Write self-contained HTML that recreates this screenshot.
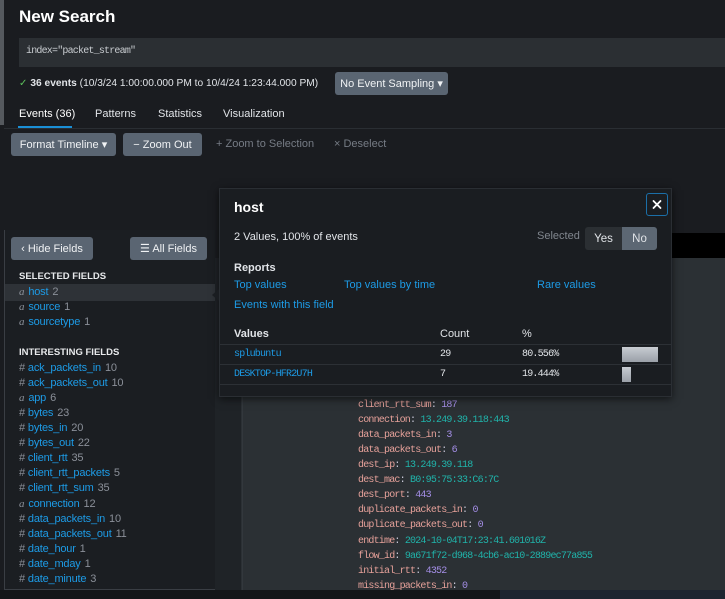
<!DOCTYPE html>
<html><head><meta charset="utf-8"><style>
*{margin:0;padding:0;box-sizing:border-box}
body{width:725px;height:599px;overflow:hidden;background:#1a1c20;font-family:"Liberation Sans",sans-serif;color:#e1e4e8;position:relative;font-size:11px}
.a{position:absolute;white-space:nowrap}
.mono{font-family:"Liberation Mono",monospace;letter-spacing:-0.8px}
.btn{position:absolute;background:#5a6572;color:#f0f2f4;border-radius:3px;font-size:11px;display:flex;align-items:center;justify-content:center;white-space:nowrap}
.blue{color:#1d9be6}
.fl{position:absolute;left:19px;font-size:11px;letter-spacing:-0.2px;white-space:nowrap}
.fl i{color:#8b9099;font-style:italic;font-family:"Liberation Serif",serif;margin-right:4px}
.fl b{color:#8b9099;font-weight:normal;margin-right:3px}
.fl s{text-decoration:none;color:#8b9099;margin-left:4px}
.ev{position:absolute;left:358px;font-family:"Liberation Mono",monospace;letter-spacing:-0.8px;font-size:10px;white-space:nowrap;color:#e6a19a}
.ev .c{color:#ccd}
.n{color:#a48ee6}.t{color:#20b3aa}
</style></head><body>
<div class="a" style="left:0;top:0;width:4px;height:125px;background:#55595e"></div>
<div class="a" style="left:19px;top:7px;font-size:17px;font-weight:bold;color:#fff">New Search</div>
<div class="a" style="left:19px;top:38px;width:706px;height:29px;background:#2b2f33"></div>
<div class="a mono" style="left:26px;top:46px;font-size:10px;color:#c8ccd0">index="packet_stream"</div>
<div class="a" style="left:19px;top:78px;font-size:10.2px"><span style="color:#5cc05c">✓</span> <b>36 events</b> (10/3/24 1:00:00.000 PM to 10/4/24 1:23:44.000 PM)</div>
<div class="btn" style="left:335px;top:72px;width:113px;height:23px">No Event Sampling ▾</div>
<div class="a" style="left:19px;top:108px;font-size:11px;color:#fff">Events (36)</div>
<div class="a" style="left:95px;top:108px;font-size:11px">Patterns</div>
<div class="a" style="left:158px;top:108px;font-size:11px">Statistics</div>
<div class="a" style="left:223px;top:108px;font-size:11px">Visualization</div>
<div class="a" style="left:18px;top:126px;width:54px;height:2px;background:#1a8fd6"></div>
<div class="a" style="left:4px;top:128px;width:721px;height:1px;background:#2a2e33"></div>
<div class="btn" style="left:11px;top:133px;width:105px;height:23px">Format Timeline ▾</div>
<div class="btn" style="left:123px;top:133px;width:79px;height:23px">− Zoom Out</div>
<div class="a" style="left:216px;top:138px;font-size:11px;color:#767c85">+ Zoom to Selection</div>
<div class="a" style="left:334px;top:138px;font-size:11px;color:#767c85">× Deselect</div>

<div class="a" style="left:672px;top:233px;width:53px;height:25px;background:#000"></div>
<div class="a" style="left:215px;top:258px;width:510px;height:332px;background:#2b3034"></div>
<div class="a" style="left:215px;top:258px;width:26px;height:332px;background:#1f2327"></div>
<div class="a" style="left:242px;top:258px;width:1px;height:332px;background:#33383d"></div>
<div class="a" style="left:0;top:590px;width:725px;height:9px;background:#141619"></div>
<div class="a" style="left:500px;top:590px;width:225px;height:9px;background:#1d2530"></div>

<div class="a" style="left:4px;top:230px;width:211px;height:360px;background:#1b1e22;border-bottom:1px solid #3a3e44;border-left:1px solid #3a3e44"></div>
<div class="btn" style="left:11px;top:237px;width:82px;height:23px">‹ Hide Fields</div>
<div class="btn" style="left:130px;top:237px;width:77px;height:23px">☰ All Fields</div>
<div class="a" style="left:19px;top:271px;font-size:9.5px;font-weight:bold;color:#e8eaec">SELECTED FIELDS</div>
<div class="a" style="left:5px;top:284px;width:210px;height:17px;background:#2e3237"></div>
<div class="fl" style="top:286px"><i>a</i><span class="blue">host</span><s>2</s></div>
<div class="fl" style="top:301px"><i>a</i><span class="blue">source</span><s>1</s></div>
<div class="fl" style="top:316px"><i>a</i><span class="blue">sourcetype</span><s>1</s></div>
<div class="a" style="left:19px;top:347px;font-size:9.5px;font-weight:bold;color:#e8eaec">INTERESTING FIELDS</div>
<div class="fl" style="top:362px"><b>#</b><span class="blue">ack_packets_in</span><s>10</s></div>
<div class="fl" style="top:377px"><b>#</b><span class="blue">ack_packets_out</span><s>10</s></div>
<div class="fl" style="top:392px"><i>a</i><span class="blue">app</span><s>6</s></div>
<div class="fl" style="top:407px"><b>#</b><span class="blue">bytes</span><s>23</s></div>
<div class="fl" style="top:422px"><b>#</b><span class="blue">bytes_in</span><s>20</s></div>
<div class="fl" style="top:437px"><b>#</b><span class="blue">bytes_out</span><s>22</s></div>
<div class="fl" style="top:452px"><b>#</b><span class="blue">client_rtt</span><s>35</s></div>
<div class="fl" style="top:467px"><b>#</b><span class="blue">client_rtt_packets</span><s>5</s></div>
<div class="fl" style="top:482px"><b>#</b><span class="blue">client_rtt_sum</span><s>35</s></div>
<div class="fl" style="top:498px"><i>a</i><span class="blue">connection</span><s>12</s></div>
<div class="fl" style="top:513px"><b>#</b><span class="blue">data_packets_in</span><s>10</s></div>
<div class="fl" style="top:528px"><b>#</b><span class="blue">data_packets_out</span><s>11</s></div>
<div class="fl" style="top:543px"><b>#</b><span class="blue">date_hour</span><s>1</s></div>
<div class="fl" style="top:558px"><b>#</b><span class="blue">date_mday</span><s>1</s></div>
<div class="fl" style="top:573px"><b>#</b><span class="blue">date_minute</span><s>3</s></div>

<div class="ev" style="top:400px">client_rtt_sum<span class="c">:</span> <span class="n">187</span></div>
<div class="ev" style="top:415px">connection<span class="c">:</span> <span class="t">13.249.39.118:443</span></div>
<div class="ev" style="top:430px">data_packets_in<span class="c">:</span> <span class="n">3</span></div>
<div class="ev" style="top:445px">data_packets_out<span class="c">:</span> <span class="n">6</span></div>
<div class="ev" style="top:460px">dest_ip<span class="c">:</span> <span class="t">13.249.39.118</span></div>
<div class="ev" style="top:475px">dest_mac<span class="c">:</span> <span class="t">B0:95:75:33:C6:7C</span></div>
<div class="ev" style="top:490px">dest_port<span class="c">:</span> <span class="n">443</span></div>
<div class="ev" style="top:505px">duplicate_packets_in<span class="c">:</span> <span class="n">0</span></div>
<div class="ev" style="top:520px">duplicate_packets_out<span class="c">:</span> <span class="n">0</span></div>
<div class="ev" style="top:536px">endtime<span class="c">:</span> <span class="t">2024-10-04T17:23:41.601016Z</span></div>
<div class="ev" style="top:551px">flow_id<span class="c">:</span> <span class="t">9a671f72-d968-4cb6-ac10-2889ec77a855</span></div>
<div class="ev" style="top:566px">initial_rtt<span class="c">:</span> <span class="n">4352</span></div>
<div class="ev" style="top:581px">missing_packets_in<span class="c">:</span> <span class="n">0</span></div>

<div class="a" style="left:219px;top:188px;width:453px;height:209px;background:#1a1d21;border:1px solid #2a2e33;box-shadow:0 2px 8px rgba(0,0,0,.6)"></div>
<div class="a" style="left:212px;top:289px;width:0;height:0;border-top:6px solid transparent;border-bottom:6px solid transparent;border-right:7px solid #1a1d21"></div>
<div class="a" style="left:234px;top:199px;font-size:14px;font-weight:bold;color:#fff">host</div>
<div class="a" style="left:646px;top:193px;width:22px;height:23px;border:1px solid #1b6fa8;border-radius:3px"><svg width="20" height="21" viewBox="0 0 20 21" style="position:absolute;left:0;top:0"><path d="M6.5 7L13.5 14M13.5 7L6.5 14" stroke="#fff" stroke-width="1.8" stroke-linecap="round"/></svg></div>
<div class="a" style="left:234px;top:231px;font-size:11px">2 Values, 100% of events</div>
<div class="a" style="left:537px;top:230px;font-size:11px;color:#80868e">Selected</div>
<div class="a" style="left:585px;top:227px;width:37px;height:23px;background:#2b2f33;border-radius:3px 0 0 3px;display:flex;align-items:center;justify-content:center;font-size:11.5px">Yes</div>
<div class="a" style="left:622px;top:227px;width:35px;height:23px;background:#5c6773;border-radius:0 3px 3px 0;display:flex;align-items:center;justify-content:center;font-size:11.5px">No</div>
<div class="a" style="left:234px;top:262px;font-size:11px;font-weight:bold">Reports</div>
<div class="a blue" style="left:234px;top:279px;font-size:11px">Top values</div>
<div class="a blue" style="left:344px;top:279px;font-size:11px">Top values by time</div>
<div class="a blue" style="left:537px;top:279px;font-size:11px">Rare values</div>
<div class="a blue" style="left:234px;top:299px;font-size:11px">Events with this field</div>
<div class="a" style="left:234px;top:328px;font-size:11px;font-weight:bold">Values</div>
<div class="a" style="left:440px;top:328px;font-size:11px">Count</div>
<div class="a" style="left:522px;top:328px;font-size:11px">%</div>
<div class="a" style="left:220px;top:344px;width:451px;height:1px;background:#2c3035"></div>
<div class="a" style="left:220px;top:364px;width:451px;height:1px;background:#2c3035"></div>
<div class="a" style="left:220px;top:384px;width:451px;height:1px;background:#2c3035"></div>
<div class="a mono blue" style="left:234px;top:349px;font-size:10px">splubuntu</div>
<div class="a mono" style="left:440px;top:349px;font-size:10px">29</div>
<div class="a mono" style="left:522px;top:349px;font-size:10px">80.556%</div>
<div class="a" style="left:622px;top:347px;width:36px;height:15px;background:linear-gradient(#c8ccd2,#9aa0a8)"></div>
<div class="a mono blue" style="left:234px;top:369px;font-size:10px">DESKTOP-HFR2U7H</div>
<div class="a mono" style="left:440px;top:369px;font-size:10px">7</div>
<div class="a mono" style="left:522px;top:369px;font-size:10px">19.444%</div>
<div class="a" style="left:622px;top:367px;width:9px;height:15px;background:linear-gradient(#c8ccd2,#9aa0a8)"></div>
</body></html>
